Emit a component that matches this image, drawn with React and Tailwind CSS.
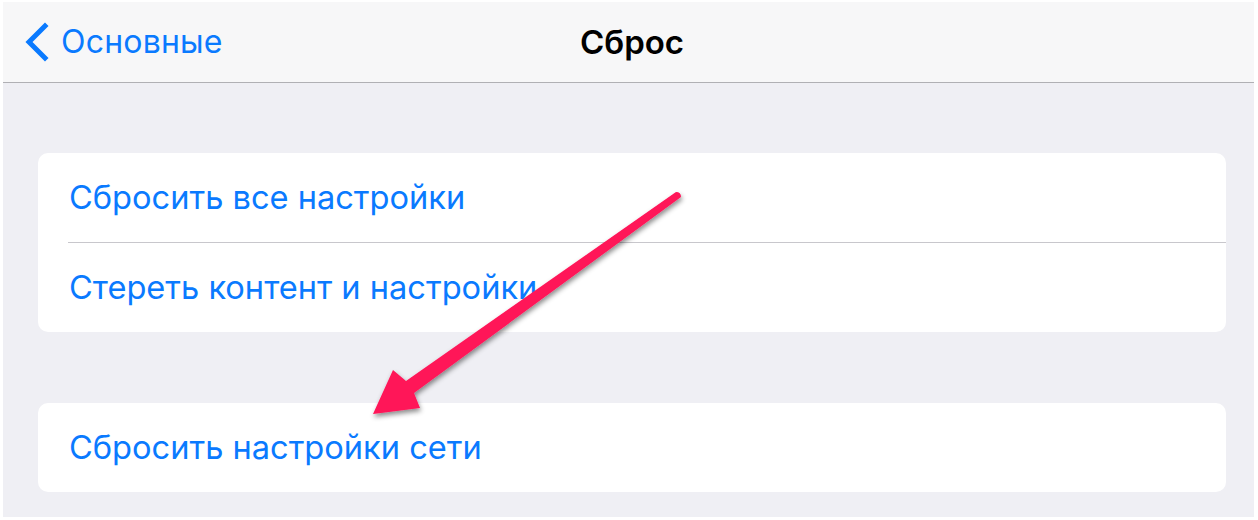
import React from "react";

export default function App() {
  const font = { fontFamily: "Inter, 'Noto Sans', sans-serif" };
  return (
    <div className="relative w-[1258px] h-[520px] bg-white pl-[3px] pr-[4px] pt-[2px] pb-[3px]" style={font}>
      <div className="h-full w-full bg-[#efeff4] flex flex-col">
        <div className="relative h-[81px] bg-[#f7f7f8] border-b border-[#b0b0b4] flex items-center shrink-0">
          <div className="flex items-center pl-[20px] text-[#0a7aff] gap-[12px]">
            <svg width="26" height="40" viewBox="0 0 26 40">
              <path d="M22 4 L6 20 L22 36" fill="none" stroke="#0a7aff" strokeWidth="5" strokeLinecap="square" />
            </svg>
            <span className="text-[32px] leading-none tracking-[0.2px]">Основные</span>
          </div>
          <div className="absolute inset-0 flex items-center justify-center pl-[7px] pointer-events-none">
            <span className="text-[33px] font-semibold text-black leading-none">Сброс</span>
          </div>
        </div>
        <div className="pl-[35px] pr-[28px] pt-[70px] flex flex-col gap-[71px]">
          <div className="bg-white rounded-[10px] flex flex-col">
            <div className="h-[89px] flex items-center pl-[31px] text-[32.6px] text-[#0a7aff]">Сбросить все настройки</div>
            <div className="ml-[30px] h-px bg-[#c8c7cc]" />
            <div className="h-[89px] flex items-center pl-[31px] text-[32.6px] text-[#0a7aff]">Стереть контент и настройки</div>
          </div>
          <div className="bg-white rounded-[10px] flex flex-col">
            <div className="h-[89px] flex items-center pl-[31px] text-[32.6px] text-[#0a7aff]">Сбросить настройки сети</div>
          </div>
        </div>
      </div>
      <svg className="absolute left-0 top-0 pointer-events-none" width="1258" height="520" viewBox="0 0 1258 520">
        <defs>
          <filter id="sh" x="-20%" y="-20%" width="140%" height="140%">
            <feDropShadow dx="1" dy="3" stdDeviation="2.5" floodColor="#000" floodOpacity="0.45" />
          </filter>
        </defs>
        <path
          d="M676 192 Q681 192 681 197 L414 393 L420 408 L373 414 L393 370 L406 381 Z"
          fill="#ff1458"
          filter="url(#sh)"
        />
      </svg>
    </div>
  );
}
